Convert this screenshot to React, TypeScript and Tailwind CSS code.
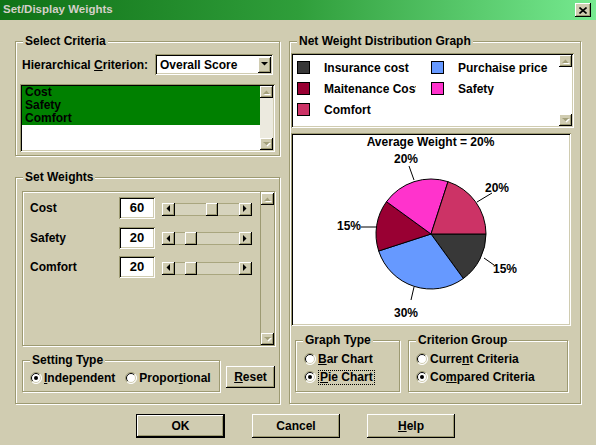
import React from "react";

// classic 3D borders in the olive scheme
const raised = "bg-[#d0ccb1] shadow-[inset_-1px_-1px_0_#000,inset_1px_1px_0_#fff,inset_-2px_-2px_0_#9d9a72]";
const sunken = "shadow-[inset_1px_1px_0_#9d9a72,inset_-1px_-1px_0_#fff,inset_2px_2px_0_#000,inset_-2px_-2px_0_#d0ccb1]";
const etched = "border border-[#9d9a72] shadow-[inset_1px_1px_0_#fff,1px_1px_0_#fff]";

type Dir = "up" | "down" | "left" | "right";

function Arrow({ dir, off }: { dir: Dir; off?: boolean }) {
    const horiz = dir === "left" || dir === "right";
    const pts = {
        up: "0,4 7,4 3.5,0.5",
        down: "0,0 7,0 3.5,3.5",
        left: "4,0 4,7 0.5,3.5",
        right: "0,0 0,7 3.5,3.5",
    }[dir];
    return (
        <svg width={horiz ? 5 : 8} height={horiz ? 8 : 5} className="shrink-0">
            {off && <polygon points={pts} fill="#fff" transform="translate(1 1)" />}
            <polygon points={pts} fill={off ? "#a3a07a" : "#000"} />
        </svg>
    );
}

function ScrollBtn({ dir, off, className = "w-[13px] h-[12px]" }: { dir: Dir; off?: boolean; className?: string }) {
    return (
        <div className={`${className} flex items-center justify-center shrink-0 ${raised}`}>
            <Arrow dir={dir} off={off} />
        </div>
    );
}

function Group({ label, className, children }: { label: string; className: string; children?: React.ReactNode }) {
    return (
        <div className={`relative ${etched} ${className}`}>
            <span className="absolute -top-[8px] left-[7px] bg-[#d0ccb1] px-[2px] leading-[14px] whitespace-nowrap">{label}</span>
            {children}
        </div>
    );
}

function Radio({ checked }: { checked?: boolean }) {
    return (
        <svg width="12" height="12" viewBox="0 0 12 12" className="shrink-0">
            <circle cx="6" cy="6" r="5.5" fill="#fff" />
            <path d="M2.1 9.9A5.5 5.5 0 0 1 9.9 2.1" fill="none" stroke="#9d9a72" />
            <path d="M2.8 9.2A4.5 4.5 0 0 1 9.2 2.8" fill="none" stroke="#000" />
            <path d="M9.9 2.1A5.5 5.5 0 0 1 2.1 9.9" fill="none" stroke="#fff" />
            <path d="M9.2 2.8A4.5 4.5 0 0 1 2.8 9.2" fill="none" stroke="#d0ccb1" />
            {checked && <circle cx="6" cy="6" r="2" fill="#000" />}
        </svg>
    );
}

function Option({ checked, children }: { checked?: boolean; children: React.ReactNode }) {
    return (
        <div className="flex items-center gap-[2px] h-[18px] whitespace-nowrap">
            <Radio checked={checked} />
            {children}
        </div>
    );
}

function Slider({ thumb }: { thumb: string }) {
    return (
        <div className="flex w-[90px] h-[13px]">
            <ScrollBtn dir="left" className="w-[13px] h-[13px]" />
            <div className="flex-1 flex bg-[#d6d3bd] border-y border-[#a9a67f]">
                <div className={`${thumb} w-[12px] h-[13px] -mt-px ${raised}`} />
            </div>
            <ScrollBtn dir="right" className="w-[13px] h-[13px]" />
        </div>
    );
}

const weights = [
    { name: "Cost", value: "60", thumb: "ml-[31px]" },
    { name: "Safety", value: "20", thumb: "ml-[10px]" },
    { name: "Comfort", value: "20", thumb: "ml-[10px]" },
];

const legend = [
    { name: "Insurance cost", color: "bg-[#383838]" },
    { name: "Purchaise price", color: "bg-[#6699ff]" },
    { name: "Maitenance Cost", color: "bg-[#990033]" },
    { name: "Safety", color: "bg-[#ff33cc]" },
    { name: "Comfort", color: "bg-[#cc3366]" },
];

// slices: clockwise from 3 o'clock
const slices = [
    { d: "M138 99L193 99A55 55 0 0 1 170.33 143.5Z", fill: "#383838" },
    { d: "M138 99L170.33 143.5A55 55 0 0 1 85.69 116Z", fill: "#6699ff" },
    { d: "M138 99L85.69 116A55 55 0 0 1 93.5 66.67Z", fill: "#990033" },
    { d: "M138 99L93.5 66.67A55 55 0 0 1 155 46.69Z", fill: "#ff33cc" },
    { d: "M138 99L155 46.69A55 55 0 0 1 193 99Z", fill: "#cc3366" },
];

const labels = [
    { x: 113, y: 27.5, t: "20%", l: [116, 31, 121, 45] },
    { x: 204, y: 56.5, t: "20%", l: [199, 58, 184, 67] },
    { x: 56, y: 94.5, t: "15%", l: [68, 92, 83, 92] },
    { x: 212, y: 137.5, t: "15%", l: [191, 123, 201, 130] },
    { x: 113, y: 181.5, t: "30%", l: [121, 152, 118, 165] },
];

function PieChart() {
    return (
        <svg width="276" height="189" className="block">
            <g fontFamily="'Liberation Sans', Arial, sans-serif" fontWeight="bold" fontSize="12" textAnchor="middle">
                <text x="137.5" y="10.5">Average Weight = 20%</text>
                {slices.map((s, i) => (
                    <path key={i} d={s.d} fill={s.fill} stroke="#000" strokeWidth="1" />
                ))}
                {labels.map((l, i) => (
                    <g key={i}>
                        <line x1={l.l[0]} y1={l.l[1]} x2={l.l[2]} y2={l.l[3]} stroke="#000" />
                        <text x={l.x} y={l.y}>{l.t}</text>
                    </g>
                ))}
            </g>
        </svg>
    );
}

function Button({ children, isDefault }: { children: React.ReactNode; isDefault?: boolean }) {
    return (
        <div className={`h-[24px] flex items-center justify-center ${isDefault ? "w-[89px] border border-black" : "w-[88px]"}`}>
            <div className={`w-full h-full flex items-center justify-center ${raised}`}>{children}</div>
        </div>
    );
}

export default function App() {
    return (
        <div className="w-[596px] h-[445px] bg-[#d0ccb1] font-['Liberation_Sans',Arial,sans-serif] text-[12px] font-bold text-black overflow-hidden select-none">
            {/* title bar */}
            <div className="h-[20px] flex items-center justify-between pl-[3px] pr-[5px] bg-linear-to-r from-[#0f7216] via-[#2f9e3a] to-[#76ea90]">
                <span className="text-[#d4d0c8] text-[11.5px] leading-none">Set/Display Weights</span>
                <div className={`w-[16px] h-[14px] flex items-center justify-center ${raised}`}>
                    <svg width="8" height="7">
                        <path d="M0.5 0.5L7.5 6.5M7.5 0.5L0.5 6.5" stroke="#000" strokeWidth="1.6" />
                    </svg>
                </div>
            </div>

            <div className="flex pl-[15px] pt-[21px] gap-[9px]">
                {/* left column */}
                <div className="w-[265px] flex flex-col gap-[21px]">
                    <Group label="Select Criteria" className="h-[115px]">
                        <div className="pt-[12px] px-[4px]">
                            <div className="flex items-center justify-between px-[2px]">
                                <span>Hierarchical <u>C</u>riterion:</span>
                                <div className={`w-[118px] h-[21px] bg-white flex items-center justify-between pl-[5px] pr-[2px] ${sunken}`}>
                                    <span>Overall Score</span>
                                    <div className={`w-[13px] h-[16px] flex items-center justify-center ${raised}`}>
                                        <Arrow dir="down" />
                                    </div>
                                </div>
                            </div>
                            <div className={`mt-[9px] h-[68px] bg-white flex p-[2px] ${sunken}`}>
                                <div className="flex-1 leading-[13px]">
                                    {["Cost", "Safety", "Comfort"].map((c) => (
                                        <div key={c} className="bg-[#008000] pl-[3px] h-[13px]">{c}</div>
                                    ))}
                                </div>
                                <div className="w-[13px] flex flex-col justify-between bg-[#eceadf]">
                                    <ScrollBtn dir="up" off />
                                    <ScrollBtn dir="down" off />
                                </div>
                            </div>
                        </div>
                    </Group>

                    <Group label="Set Weights" className="h-[227px]">
                        <div className="pt-[13px] pl-[6px] pr-[4px]">
                            <div className={`h-[155px] flex ${etched}`}>
                                <div className="flex-1 flex flex-col gap-[7.5px] pt-[5px] pl-[7px]">
                                    {weights.map((w) => (
                                        <div key={w.name} className="flex items-center">
                                            <span className="w-[89px]">{w.name}</span>
                                            <div className={`w-[36px] h-[22px] bg-white flex items-center justify-center text-[13px] ${sunken}`}>{w.value}</div>
                                            <div className="ml-[7px] mt-[2px]">
                                                <Slider thumb={w.thumb} />
                                            </div>
                                        </div>
                                    ))}
                                </div>
                                <div className="w-[14px] flex flex-col justify-between border-l border-[#9d9a72] pt-px">
                                    <ScrollBtn dir="up" off />
                                    <ScrollBtn dir="down" off />
                                </div>
                            </div>
                            <div className="mt-[14px] flex items-center gap-[6px]">
                                <Group label="Setting Type" className="w-[198px] h-[32px]">
                                    <div className="flex items-center gap-[10px] pl-[7px] pt-[8px]">
                                        <Option checked>
                                            <span><u>I</u>ndependent</span>
                                        </Option>
                                        <Option>
                                            <span>Propor<u>t</u>ional</span>
                                        </Option>
                                    </div>
                                </Group>
                                <div className={`w-[49px] h-[22px] mt-[2px] flex items-center justify-center ${raised}`}>
                                    <span><u>R</u>eset</span>
                                </div>
                            </div>
                        </div>
                    </Group>
                </div>

                {/* right column */}
                <Group label="Net Weight Distribution Graph" className="w-[292px] h-[363px]">
                    <div className="pt-[11px] pl-[1px] pr-[6px]">
                        <div className={`h-[75px] bg-white flex p-[2px] ${sunken}`}>
                            <div className="flex-1 grid grid-cols-[134px_1fr] content-start gap-y-[8px] pt-[6px] pl-[4px]">
                                {legend.map((l) => (
                                    <div key={l.name} className="flex items-center h-[13px] overflow-hidden">
                                        <div className={`w-[13px] h-[13px] border border-black shrink-0 ${l.color}`} />
                                        <span className="ml-[14px] w-[92px] overflow-hidden whitespace-nowrap">{l.name}</span>
                                    </div>
                                ))}
                            </div>
                            <div className="w-[13px] flex flex-col justify-between">
                                <ScrollBtn dir="up" off />
                                <ScrollBtn dir="down" off />
                            </div>
                        </div>

                        <div className={`mt-[5px] w-[280px] h-[193px] bg-white p-[2px] ${sunken}`}>
                            <PieChart />
                        </div>

                        <div className="mt-[14px] flex gap-[8px] pl-[4px]">
                            <Group label="Graph Type" className="w-[105px] h-[52px]">
                                <div className="pt-[9px] pl-[8px]">
                                    <Option>
                                        <span><u>B</u>ar Chart</span>
                                    </Option>
                                    <Option checked>
                                        <span className="border border-dotted border-black px-px leading-[13px]"><u>P</u>ie Chart</span>
                                    </Option>
                                </div>
                            </Group>
                            <Group label="Criterion Group" className="w-[160px] h-[52px]">
                                <div className="pt-[9px] pl-[7px]">
                                    <Option>
                                        <span>Curre<u>n</u>t Criteria</span>
                                    </Option>
                                    <Option checked>
                                        <span>Co<u>m</u>pared Criteria</span>
                                    </Option>
                                </div>
                            </Group>
                        </div>
                    </div>
                </Group>
            </div>

            {/* dialog buttons */}
            <div className="flex pl-[136px] pt-[10px] gap-[27px]">
                <Button isDefault>OK</Button>
                <Button>Cancel</Button>
                <Button>
                    <span><u>H</u>elp</span>
                </Button>
            </div>
        </div>
    );
}
